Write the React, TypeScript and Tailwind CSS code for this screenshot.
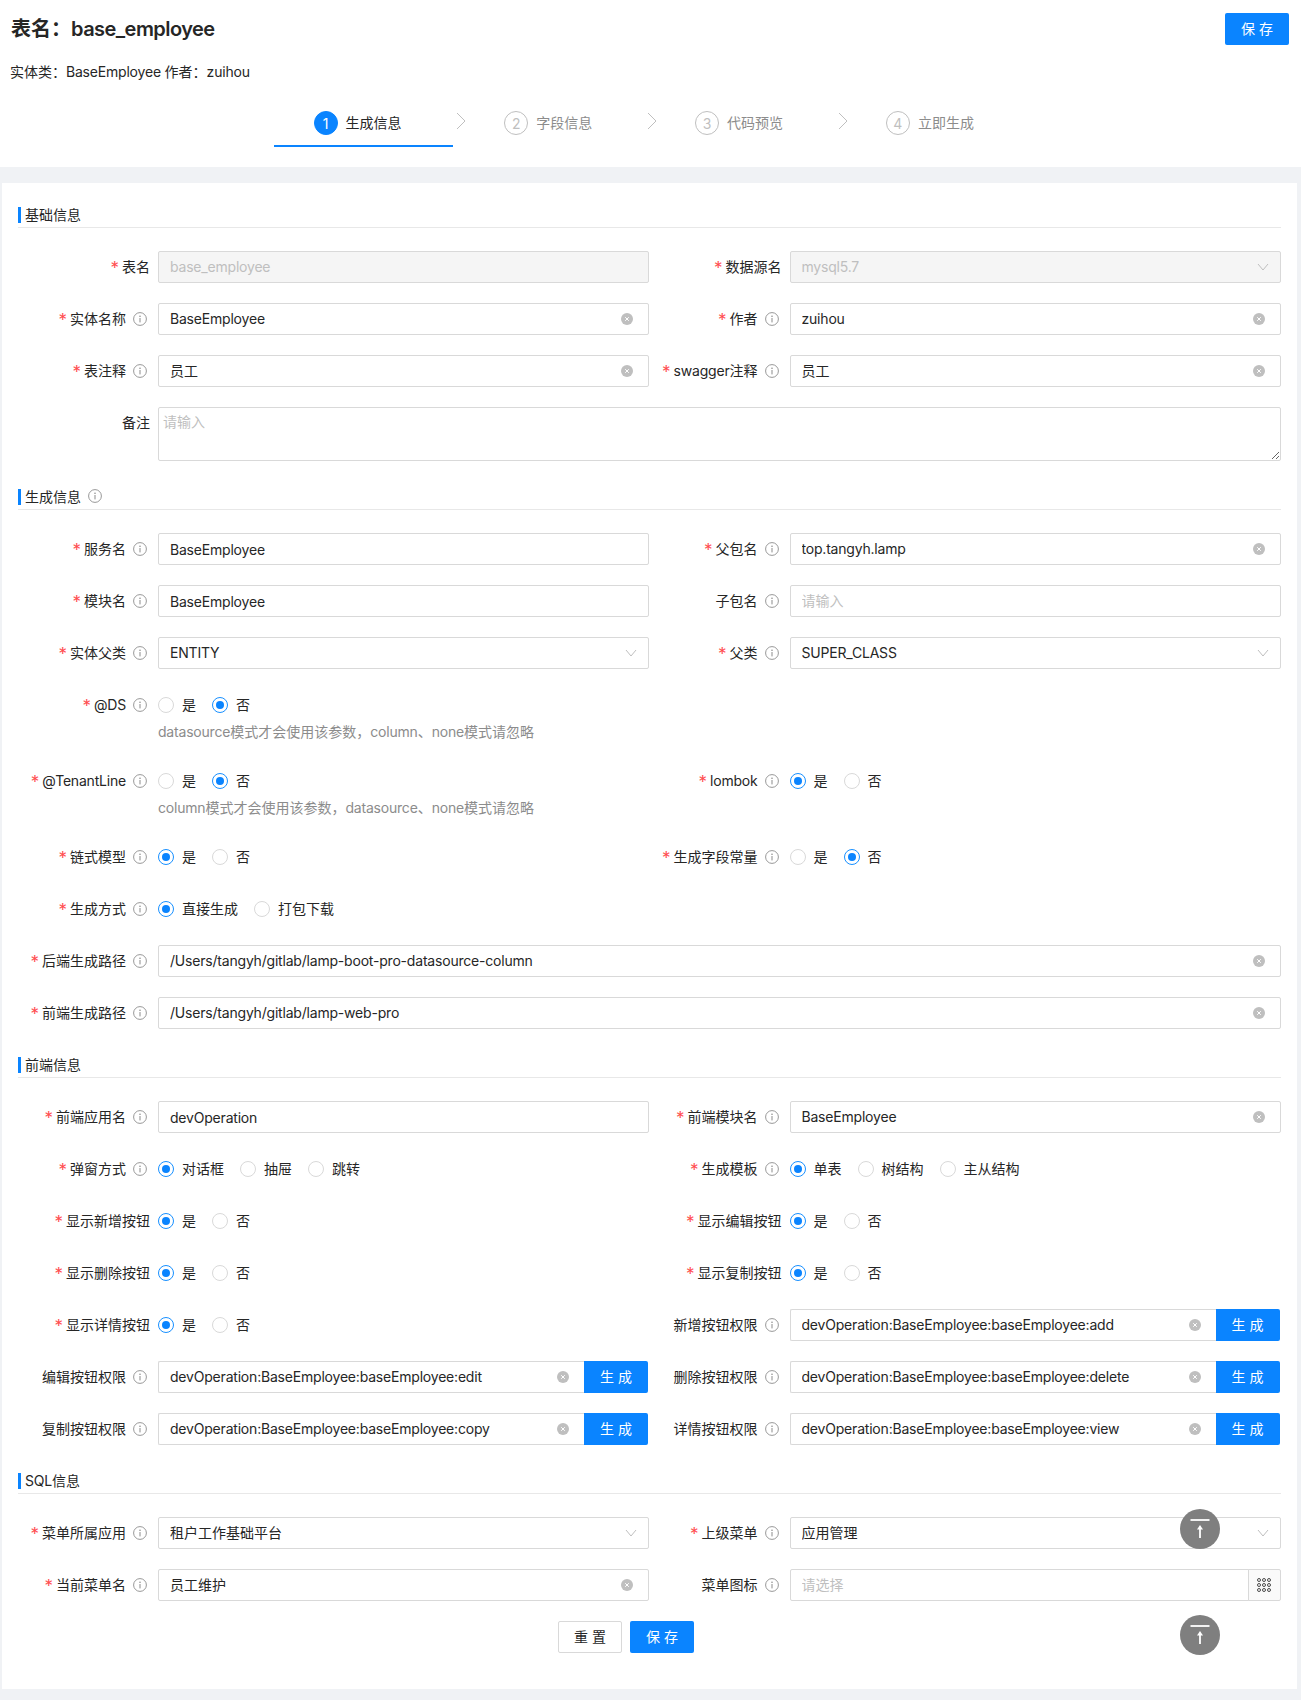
import React from "react";

const FONT = "font-['Inter','Noto_Sans_CJK_SC',sans-serif]";
const COLON = "\uFF1A";
const COMMA = "\uFF0C";

function T({ text }: { text: string }) {
  return (
    <>
      {text.split(/([\x00-\x7f]+)/).map((part, i) =>
        i % 2 === 1 ? (
          <span key={i} className="tracking-[-0.2px]">{part}</span>
        ) : (
          part
        )
      )}
    </>
  );
}

function Info() {
  return (
    <svg width="14" height="14" viewBox="0 0 14 14" className="shrink-0 ml-[7px] mr-[3px] text-[#8c8c8c]" fill="none">
      <circle cx="7" cy="7" r="6.4" stroke="currentColor" strokeWidth="0.9" />
      <circle cx="7" cy="4.2" r="0.8" fill="currentColor" />
      <rect x="6.5" y="6" width="1" height="4.4" fill="currentColor" />
    </svg>
  );
}

function Clear() {
  return (
    <svg width="12" height="12" viewBox="0 0 12 12" className="shrink-0 mr-1">
      <circle cx="6" cy="6" r="6" fill="#bfbfbf" />
      <path d="M4.2 4.2l3.6 3.6M7.8 4.2l-3.6 3.6" stroke="#fff" strokeWidth="1" />
    </svg>
  );
}

function Chevron() {
  return (
    <svg width="12" height="12" viewBox="0 0 12 12" className="shrink-0" fill="none">
      <path d="M1 3l5 6 5-6" stroke="#bfbfbf" strokeWidth="1" />
    </svg>
  );
}

function Label({ text, req, info }: { text: string; req?: boolean; info?: boolean }) {
  return (
    <div className="w-[140px] shrink-0 h-8 flex items-center justify-end pr-2 text-[14px] text-[#262626] whitespace-nowrap">
      {req && <span className="text-[#ff4d4f] mr-[3px] text-[17px] leading-none relative top-[1px]">*</span>}
      <span className="relative -top-px"><T text={text} /></span>
      {info && <Info />}
    </div>
  );
}

function Field({ label, req, info, children, help }: { label: string; req?: boolean; info?: boolean; children: React.ReactNode; help?: string }) {
  return (
    <div className="flex w-[631px] mb-5">
      <Label text={label} req={req} info={info} />
      <div className="flex-1 min-w-0">
        {children}
        {help && <div className="h-6 leading-[22px] text-[14px] text-[#8c8c8c]"><T text={help} /></div>}
      </div>
    </div>
  );
}

function Input({ value, placeholder, clear, disabled, button, select, grid }: { value?: string; placeholder?: string; clear?: boolean; disabled?: boolean; button?: boolean; select?: boolean; grid?: boolean }) {
  const plain = value && !clear && !select && !disabled;
  return (
    <div className="flex h-8">
      <div className={`flex-1 min-w-0 flex items-center h-8 border border-[#d9d9d9] pl-[11px] pr-[11px] rounded-[2px] text-[14px] ${disabled ? "bg-[#f5f5f5] text-[#bfbfbf]" : "bg-white text-[#262626]"} ${button ? "rounded-r-none border-r-0" : ""} ${grid ? "rounded-r-none" : ""}`}>
        <span className={`flex-1 truncate ${plain ? "" : "relative -top-px"} ${value ? "" : "text-[#bfbfbf]"}`}><T text={value || placeholder || ""} /></span>
        {clear && <Clear />}
        {select && <Chevron />}
      </div>
      {grid && (
        <div className="w-[33px] h-8 -ml-px flex items-center justify-center bg-[#fafafa] border border-[#d9d9d9] rounded-r-[2px]">
          <svg width="14" height="14" viewBox="0 0 14 14" fill="none" stroke="#4d4d4d" strokeWidth="1">
            {[2, 7, 12].map((y) => [2, 7, 12].map((x) => <circle key={`${x}-${y}`} cx={x} cy={y} r="1.5" />))}
          </svg>
        </div>
      )}
      {button && (
        <button className="w-[64px] mr-px h-8 bg-[#0a84ff] text-white text-[14px] rounded-r-[2px] tracking-[4px] pl-1 pb-[2px]">
          生成
        </button>
      )}
    </div>
  );
}

function Radio({ on, text }: { on?: boolean; text: string }) {
  return (
    <div className="flex items-center mr-2">
      <span className={`w-4 h-4 rounded-full border flex items-center justify-center bg-white ${on ? "border-[#1890ff]" : "border-[#d9d9d9]"}`}>
        {on && <span className="w-2 h-2 rounded-full bg-[#0a84ff]" />}
      </span>
      <span className="px-2 text-[14px] text-[#262626] relative -top-px">{text}</span>
    </div>
  );
}

function Radios({ items, on }: { items: string[]; on: number }) {
  return (
    <div className="flex items-center h-8">
      {items.map((t, i) => (
        <Radio key={t} text={t} on={i === on} />
      ))}
    </div>
  );
}

const YN = ["是", "否"];

function Section({ title, info }: { title: string; info?: boolean }) {
  return (
    <div className="h-[21px] mb-[23px] border-b border-[#e8e8e8] flex items-start text-[14px] text-[#262626] leading-4">
      <span className="w-[3px] h-4 bg-[#0a84ff] mr-1 shrink-0" />
      <span><T text={title} /></span>
      {info && <Info />}
    </div>
  );
}

function Row({ children, mb }: { children: React.ReactNode; mb?: boolean }) {
  return <div className={`flex gap-[0.5px] ${mb ? "mb-2" : ""}`}>{children}</div>;
}

function Step({ n, text, active, chevron }: { n: number; text: string; active?: boolean; chevron?: boolean }) {
  return (
    <div className="relative w-[190.8px] h-[46px]">
      <div className={`flex items-center h-[46px] pl-[39.5px] border-b-2 ${active ? "border-[#0a84ff] w-[179px]" : "border-transparent"}`}>
        <span className={`w-6 h-6 rounded-full border flex items-center justify-center text-[14px] shrink-0 ${active ? "bg-[#0a84ff] border-[#0a84ff] text-white" : "border-[#bfbfbf] text-[#bfbfbf]"}`}>{n}</span>
        <span className={`ml-2 text-[14px] whitespace-nowrap relative -top-px ${active ? "text-[#262626]" : "text-[#8c8c8c]"}`}>{text}</span>
      </div>
      {chevron && (
        <svg width="10" height="18" viewBox="0 0 10 18" fill="none" className="absolute left-[182px] top-[11px]">
          <path d="M1 1l8 8-8 8" stroke="#bfbfbf" strokeWidth="1" />
        </svg>
      )}
    </div>
  );
}

function BackTop({ top }: { top: string }) {
  return (
    <div className={`absolute left-[1179.5px] ${top} w-10 h-10 rounded-full bg-[#7f7f7f]`}>
      <svg width="40" height="40" viewBox="0 0 40 40" fill="none">
        <rect x="10.5" y="10" width="19" height="2" fill="#f2f2f2" />
        <rect x="19.1" y="19" width="1.8" height="10" fill="#fff" />
        <path d="M17 20.5L20 16l3 4.5z" fill="#fff" />
      </svg>
    </div>
  );
}

export default function App() {
  return (
    <div className={`relative h-[1700px] bg-[#f0f2f5] overflow-hidden ${FONT}`}>
      <div className="bg-white h-[167px] px-[11px] pt-[13px]">
        <div className="flex justify-between h-8 items-center pr-[1px]">
          <div className="text-[20px] font-semibold text-[#262626]">
            {`表名${COLON}`}
            <span className="tracking-[-0.55px]">base_employee</span>
          </div>
          <button className="w-[64px] h-8 bg-[#0a84ff] text-white text-[14px] rounded-[2px] tracking-[4px] pl-1 pb-[2px]">保存</button>
        </div>
        <div className="mt-[16px] text-[14px] leading-[22px] text-[#262626] -ml-px"><T text={`实体类${COLON}BaseEmployee 作者${COLON}zuihou`} /></div>
        <div className="flex mt-[18px] ml-[263px]">
          <Step n={1} text="生成信息" active chevron />
          <Step n={2} text="字段信息" chevron />
          <Step n={3} text="代码预览" chevron />
          <Step n={4} text="立即生成" />
        </div>
      </div>
      <div className="bg-white mt-4 ml-[2px] w-[1294.6px] h-[1506px] pl-4 pt-[24px]">
        <div className="w-[1263px]">
          <Section title="基础信息" />
          <Row>
            <Field label="表名" req><Input value="base_employee" disabled /></Field>
            <Field label="数据源名" req><Input value="mysql5.7" disabled select /></Field>
          </Row>
          <Row>
            <Field label="实体名称" req info><Input value="BaseEmployee" clear /></Field>
            <Field label="作者" req info><Input value="zuihou" clear /></Field>
          </Row>
          <Row>
            <Field label="表注释" req info><Input value="员工" clear /></Field>
            <Field label="swagger注释" req info><Input value="员工" clear /></Field>
          </Row>
          <div className="flex mb-[28px]">
            <Label text="备注" />
            <textarea placeholder="请输入" className="flex-1 h-[54px] border border-[#d9d9d9] rounded-[2px] px-1 py-[3px] text-[14px] placeholder:text-[#bfbfbf]" />
          </div>
          <Section title="生成信息" info />
          <Row>
            <Field label="服务名" req info><Input value="BaseEmployee" /></Field>
            <Field label="父包名" req info><Input value="top.tangyh.lamp" clear /></Field>
          </Row>
          <Row>
            <Field label="模块名" req info><Input value="BaseEmployee" /></Field>
            <Field label="子包名" info><Input placeholder="请输入" /></Field>
          </Row>
          <Row>
            <Field label="实体父类" req info><Input value="ENTITY" select /></Field>
            <Field label="父类" req info><Input value="SUPER_CLASS" select /></Field>
          </Row>
          <Row>
            <Field label="@DS" req info help={`datasource模式才会使用该参数${COMMA}column、none模式请忽略`}><Radios items={YN} on={1} /></Field>
          </Row>
          <Row>
            <Field label="@TenantLine" req info help={`column模式才会使用该参数${COMMA}datasource、none模式请忽略`}><Radios items={YN} on={1} /></Field>
            <Field label="lombok" req info><Radios items={YN} on={0} /></Field>
          </Row>
          <Row>
            <Field label="链式模型" req info><Radios items={YN} on={0} /></Field>
            <Field label="生成字段常量" req info><Radios items={YN} on={1} /></Field>
          </Row>
          <Row>
            <Field label="生成方式" req info><Radios items={["直接生成", "打包下载"]} on={0} /></Field>
          </Row>
          <div className="flex mb-5">
            <Label text="后端生成路径" req info />
            <div className="flex-1"><Input value="/Users/tangyh/gitlab/lamp-boot-pro-datasource-column" clear /></div>
          </div>
          <div className="flex mb-[28px]">
            <Label text="前端生成路径" req info />
            <div className="flex-1"><Input value="/Users/tangyh/gitlab/lamp-web-pro" clear /></div>
          </div>
          <Section title="前端信息" />
          <Row>
            <Field label="前端应用名" req info><Input value="devOperation" /></Field>
            <Field label="前端模块名" req info><Input value="BaseEmployee" clear /></Field>
          </Row>
          <Row>
            <Field label="弹窗方式" req info><Radios items={["对话框", "抽屉", "跳转"]} on={0} /></Field>
            <Field label="生成模板" req info><Radios items={["单表", "树结构", "主从结构"]} on={0} /></Field>
          </Row>
          <Row>
            <Field label="显示新增按钮" req><Radios items={YN} on={0} /></Field>
            <Field label="显示编辑按钮" req><Radios items={YN} on={0} /></Field>
          </Row>
          <Row>
            <Field label="显示删除按钮" req><Radios items={YN} on={0} /></Field>
            <Field label="显示复制按钮" req><Radios items={YN} on={0} /></Field>
          </Row>
          <Row>
            <Field label="显示详情按钮" req><Radios items={YN} on={0} /></Field>
            <Field label="新增按钮权限" info><Input value="devOperation:BaseEmployee:baseEmployee:add" clear button /></Field>
          </Row>
          <Row>
            <Field label="编辑按钮权限" info><Input value="devOperation:BaseEmployee:baseEmployee:edit" clear button /></Field>
            <Field label="删除按钮权限" info><Input value="devOperation:BaseEmployee:baseEmployee:delete" clear button /></Field>
          </Row>
          <Row mb>
            <Field label="复制按钮权限" info><Input value="devOperation:BaseEmployee:baseEmployee:copy" clear button /></Field>
            <Field label="详情按钮权限" info><Input value="devOperation:BaseEmployee:baseEmployee:view" clear button /></Field>
          </Row>
          <Section title="SQL信息" />
          <Row>
            <Field label="菜单所属应用" req info><Input value="租户工作基础平台" select /></Field>
            <Field label="上级菜单" req info><Input value="应用管理" select /></Field>
          </Row>
          <Row>
            <Field label="当前菜单名" req info><Input value="员工维护" clear /></Field>
            <Field label="菜单图标" info><Input placeholder="请选择" grid /></Field>
          </Row>
          <div className="flex justify-center gap-2 pr-[47px]">
            <button className="w-[64px] h-8 bg-white border border-[#d9d9d9] text-[14px] text-[#262626] rounded-[2px] tracking-[4px] pl-1 pb-[2px]">重置</button>
            <button className="w-[64px] h-8 bg-[#0a84ff] text-white text-[14px] rounded-[2px] tracking-[4px] pl-1 pb-[2px]">保存</button>
          </div>
        </div>
      </div>
      <BackTop top="top-[1509px]" />
      <BackTop top="top-[1615px]" />
    </div>
  );
}
